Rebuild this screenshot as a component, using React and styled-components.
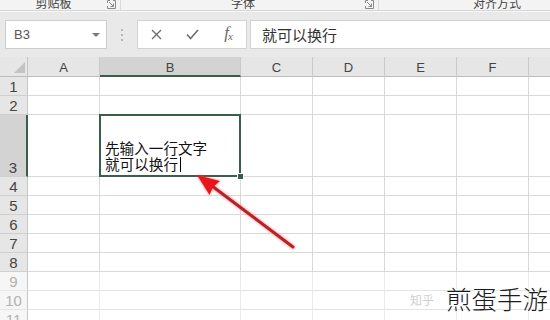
import React from 'react';
import styled, { createGlobalStyle } from 'styled-components';

const Global = createGlobalStyle`
  html, body { margin: 0; padding: 0; background: #fff; }
  body {
    width: 550px; height: 320px; overflow: hidden;
    font-family: "Liberation Sans", "Noto Sans CJK SC", sans-serif;
  }
`;

const GREEN = '#3b5e4c';
const CJK = '"Noto Sans CJK SC", "Noto Sans", sans-serif';

const Screen = styled.div`
  position: relative;
  width: 550px;
  height: 320px;
  overflow: hidden;
  display: flex;
  flex-direction: column;
  background: #fff;
`;

/* ---------- ribbon remainder ---------- */
const RibbonStrip = styled.div`
  flex: none;
  height: 10px;
  display: flex;
  overflow: hidden;
  background: #f3f3f3;
  border-bottom: 1px solid #d6d6d6;
  font-family: ${CJK};
  font-size: 12px;
  color: #444;
`;

const RibbonGroup = styled.div`
  flex: none;
  width: ${p => p.$w}px;
  display: flex;
  align-items: flex-end;
  border-right: 1px solid #dadada;
  box-sizing: border-box;
`;

const GroupLabel = styled.div`
  flex: 1;
  text-align: center;
  line-height: 12px;
  margin-bottom: 1px;
  white-space: nowrap;
`;

const Launcher = styled.svg`
  flex: none;
  width: 9px;
  height: 9px;
  margin: 0 4px 1px 0;
`;

/* ---------- formula bar ---------- */
const FormulaArea = styled.div`
  flex: none;
  height: 46px;
  box-sizing: border-box;
  display: flex;
  align-items: flex-start;
  padding: 8px 0 0 5px;
  background: #e9e9e9;
  border-top: 1px solid #f7f7f7;
`;

const NameBox = styled.div`
  flex: none;
  width: 102px;
  height: 29px;
  box-sizing: border-box;
  display: flex;
  align-items: center;
  justify-content: space-between;
  padding: 0 6px 0 8px;
  background: #fff;
  border: 1px solid #cdcdcd;
  font-size: 13px;
  color: #555;
`;

const DropArrow = styled.span`
  width: 0;
  height: 0;
  border-left: 4px solid transparent;
  border-right: 4px solid transparent;
  border-top: 4px solid #7a7a7a;
`;

const Grip = styled.div`
  flex: none;
  width: 30px;
  height: 29px;
  display: flex;
  flex-direction: column;
  align-items: center;
  justify-content: center;
  gap: 3px;
`;

const GripDot = styled.span`
  width: 2px;
  height: 2px;
  background: #b5b5b5;
`;

const ButtonsBox = styled.div`
  flex: none;
  width: 110px;
  height: 29px;
  box-sizing: border-box;
  display: flex;
  background: #fff;
  border: 1px solid #d2d2d2;
`;

const FxButton = styled.div`
  flex: 1;
  display: flex;
  align-items: center;
  justify-content: center;
  color: #6d6d6d;
`;

const FxText = styled.span`
  font-family: "Liberation Serif", serif;
  font-style: italic;
  font-size: 17px;
  line-height: 17px;
  color: #6a6a6a;
  letter-spacing: -1px;
  & sub { font-size: 11px; vertical-align: -2px; }
`;

const FormulaInput = styled.div`
  flex: 1;
  height: 29px;
  margin-left: 3px;
  margin-right: -4px;
  box-sizing: border-box;
  display: flex;
  align-items: center;
  padding-left: 11px;
  background: #fff;
  border: 1px solid #d2d2d2;
  font-family: ${CJK};
  font-size: 15px;
  color: #333;
`;

/* ---------- sheet ---------- */
const Sheet = styled.div`
  flex: none;
  display: grid;
  width: max-content;
  grid-template-columns: ${p => p.$cols};
  grid-template-rows: ${p => p.$rows};
`;

const Corner = styled.div`
  box-sizing: border-box;
  display: flex;
  align-items: flex-end;
  justify-content: flex-end;
  padding: 0 2px 3px 0;
  background: #e6e6e6;
  border-right: 1px solid #c6c6c6;
  border-bottom: 1px solid #bdbdbd;
`;

const CornerTri = styled.span`
  width: 0;
  height: 0;
  border-left: 11px solid transparent;
  border-bottom: 11px solid #c3c3c3;
`;

const ColHead = styled.div`
  box-sizing: border-box;
  display: flex;
  align-items: center;
  justify-content: center;
  padding-top: 2px;
  background: ${p => (p.$active ? '#d3d3d3' : '#e6e6e6')};
  border-right: 1px solid #c9c9c9;
  border-bottom: ${p => (p.$active ? `2px solid ${GREEN}` : '1px solid #bdbdbd')};
  font-size: 13px;
  color: #444;
`;

const RowHead = styled.div`
  box-sizing: border-box;
  display: flex;
  align-items: flex-end;
  justify-content: center;
  line-height: 17px;
  background: ${p => (p.$active ? '#d3d3d3' : p.$faded ? '#f6f6f6' : '#e6e6e6')};
  border-right: ${p => (p.$active ? `2px solid ${GREEN}` : '1px solid #c6c6c6')};
  border-bottom: 1px solid ${p => (p.$faded ? '#e6e6e6' : '#cfcfcf')};
  font-size: 15px;
  color: ${p => (p.$faded ? '#b2b2b2' : '#444')};
`;

const Cell = styled.div`
  box-sizing: border-box;
  border-right: 1px solid ${p => (p.$faded ? '#ececec' : '#d9d9d9')};
  border-bottom: 1px solid ${p => (p.$faded ? '#e4e4e4' : '#d9d9d9')};
  background: #fff;
`;

const ActiveCell = styled(Cell)`
  position: relative;
  z-index: 2;
  display: flex;
  flex-direction: column;
  justify-content: flex-end;
  padding: 0 0 3px 5px;
  font-family: "Liberation Sans", ${CJK};
  font-size: 14.6px;
  line-height: 16px;
  color: #111;
  &::after {
    content: '';
    position: absolute;
    top: -1px;
    left: -1px;
    right: -1px;
    bottom: -1px;
    border: 2px solid ${GREEN};
    pointer-events: none;
  }
`;

const CellLine = styled.div`
  height: 16px;
  white-space: nowrap;
`;

const FillHandle = styled.span`
  position: absolute;
  right: -4px;
  bottom: -4px;
  width: 5px;
  height: 5px;
  background: ${GREEN};
  border: 1px solid #fff;
  z-index: 3;
`;

const Caret = styled.span`
  display: inline-block;
  width: 1px;
  height: 15px;
  margin-left: 2px;
  vertical-align: -2px;
  background: #000;
`;

/* ---------- overlays ---------- */
const ArrowLayer = styled.svg`
  position: absolute;
  left: 0;
  top: 0;
  width: 550px;
  height: 320px;
  pointer-events: none;
  z-index: 5;
`;

const Watermark = styled.div`
  position: absolute;
  left: 410px;
  top: 282px;
  display: flex;
  align-items: flex-end;
  gap: 12px;
  z-index: 6;
  font-family: ${CJK};
  white-space: nowrap;
`;

const WmSmall = styled.span`
  font-size: 12px;
  line-height: 16px;
  margin-bottom: 6px;
  color: #cfcfcf;
  text-shadow: 0 0 1px #fff;
`;

const WmBig = styled.span`
  font-size: 25.5px;
  line-height: 32px;
  font-weight: 300;
  color: #1c1c1c;
  text-shadow: 0 0 2px #fff, 0 0 2px #fff;
`;

const cols = [
  { k: 'A', w: 72 },
  { k: 'B', w: 141 },
  { k: 'C', w: 72 },
  { k: 'D', w: 72 },
  { k: 'E', w: 72 },
  { k: 'F', w: 72 },
  { k: 'G', w: 72 },
];

const rows = [1, 2, 3, 4, 5, 6, 7, 8, 9, 10, 11].map(n => ({ n, h: n === 3 ? 62 : 19 }));

function LauncherIcon() {
  return (
    <Launcher viewBox="0 0 9 9">
      <path d="M0.5 3 V0.5 H3 M6 0.5 H8.5 V8.5 H0.5 V6" fill="none" stroke="#8a8a8a" strokeWidth="1" />
      <path d="M2 2 L6.5 6.5 M3.5 6.5 H6.5 V3.5" fill="none" stroke="#8a8a8a" strokeWidth="1" />
    </Launcher>
  );
}

export default function App() {
  const colTpl = `28px ${cols.map(c => c.w + 'px').join(' ')}`;
  const rowTpl = `20px ${rows.map(r => r.h + 'px').join(' ')}`;
  return (
    <Screen>
      <Global />
      <RibbonStrip>
        <RibbonGroup $w={121}>
          <GroupLabel>剪贴板</GroupLabel>
          <LauncherIcon />
        </RibbonGroup>
        <RibbonGroup $w={258}>
          <GroupLabel>字体</GroupLabel>
          <LauncherIcon />
        </RibbonGroup>
        <RibbonGroup $w={250}>
          <GroupLabel>对齐方式</GroupLabel>
          <LauncherIcon />
        </RibbonGroup>
      </RibbonStrip>

      <FormulaArea>
        <NameBox>
          <span>B3</span>
          <DropArrow />
        </NameBox>
        <Grip>
          <GripDot />
          <GripDot />
          <GripDot />
        </Grip>
        <ButtonsBox>
          <FxButton>
            <svg width="11" height="11" viewBox="0 0 11 11">
              <path d="M1 1 L10 10 M10 1 L1 10" stroke="#6d6d6d" strokeWidth="1.4" />
            </svg>
          </FxButton>
          <FxButton>
            <svg width="13" height="11" viewBox="0 0 13 11">
              <path d="M1 5.5 L4.6 9.5 L12 1" fill="none" stroke="#6d6d6d" strokeWidth="1.6" />
            </svg>
          </FxButton>
          <FxButton>
            <FxText>
              f<sub>x</sub>
            </FxText>
          </FxButton>
        </ButtonsBox>
        <FormulaInput>就可以换行</FormulaInput>
      </FormulaArea>

      <Sheet $cols={colTpl} $rows={rowTpl}>
        <Corner>
          <CornerTri />
        </Corner>
        {cols.map(c => (
          <ColHead key={c.k} $active={c.k === 'B'}>
            {c.k}
          </ColHead>
        ))}
        {rows.map(r => (
          <React.Fragment key={r.n}>
            <RowHead $active={r.n === 3} $faded={r.n > 8}>
              {r.n}
            </RowHead>
            {cols.map(c =>
              r.n === 3 && c.k === 'B' ? (
                <ActiveCell key={c.k}>
                  <CellLine>先输入一行文字</CellLine>
                  <CellLine>
                    就可以换行
                    <Caret />
                  </CellLine>
                  <FillHandle />
                </ActiveCell>
              ) : (
                <Cell key={c.k} $faded={r.n > 8} />
              )
            )}
          </React.Fragment>
        ))}
      </Sheet>

      <ArrowLayer viewBox="0 0 550 320">
        <defs>
          <filter id="glow" x="-20%" y="-20%" width="140%" height="140%">
            <feGaussianBlur in="SourceAlpha" stdDeviation="1.6" result="b" />
            <feFlood floodColor="#ff4a4a" floodOpacity="0.75" />
            <feComposite in2="b" operator="in" result="g" />
            <feMerge>
              <feMergeNode in="g" />
              <feMergeNode in="SourceGraphic" />
            </feMerge>
          </filter>
        </defs>
        <g filter="url(#glow)">
          <line x1="293" y1="247" x2="212" y2="186" stroke="#b4232a" strokeWidth="3" strokeLinecap="round" />
          <path d="M197 175 L220 181 L213 187 L209.5 195 Z" fill="#e8141c" />
        </g>
      </ArrowLayer>

      <Watermark>
        <WmSmall>知乎</WmSmall>
        <WmBig>煎蛋手游</WmBig>
      </Watermark>
    </Screen>
  );
}
